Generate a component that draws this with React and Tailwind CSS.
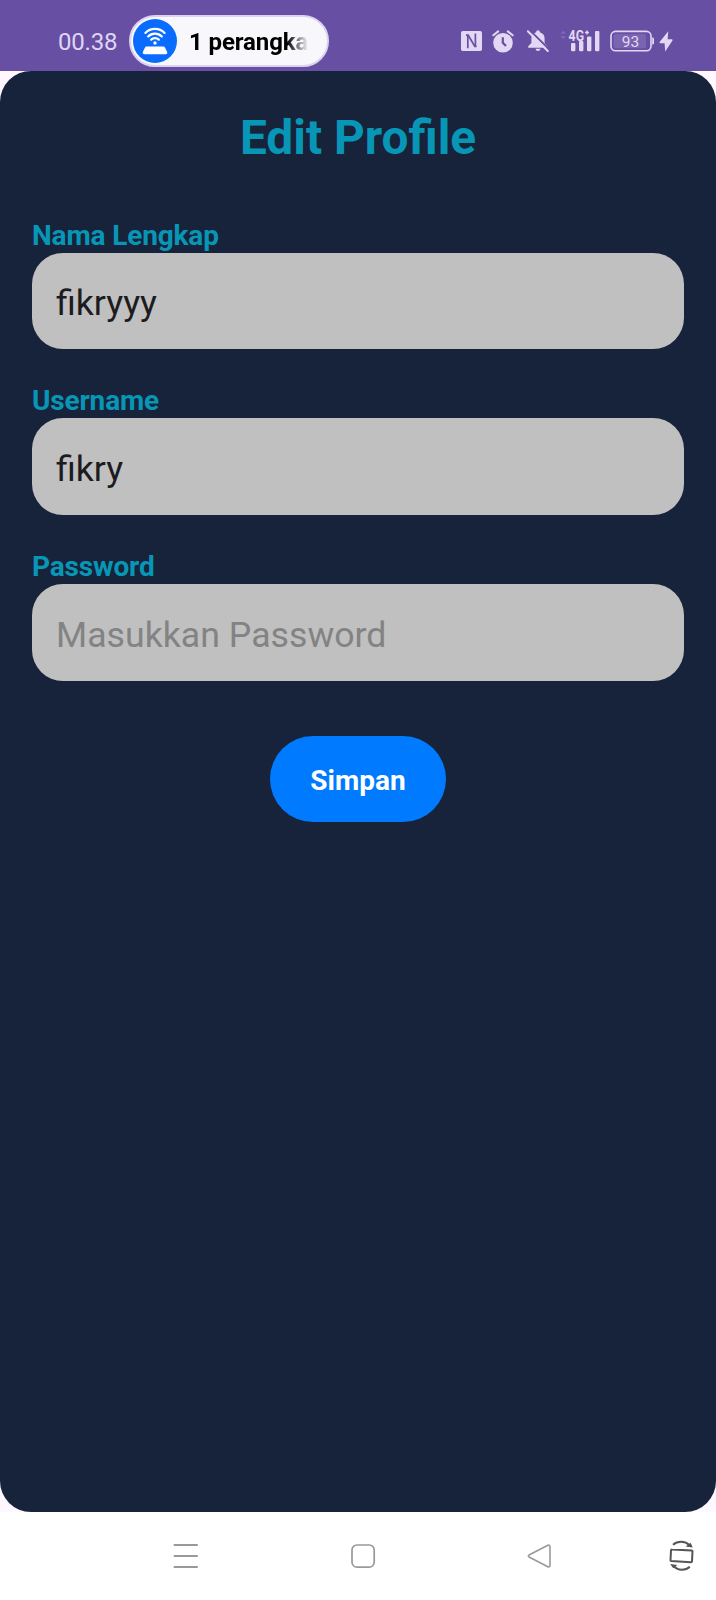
import React from "react";

const TINT = "#e2d8f3";

function HotspotIcon() {
  return (
    <svg className="block size-[44px] shrink-0" viewBox="0 0 44 44">
      <circle cx="22" cy="22" r="22" fill="#0a6cff" />
      <g fill="none" stroke="#fff" strokeWidth="2.2" strokeLinecap="round">
        <path d="M12.4 13.9 C17.6 8.4 26.4 8.4 31.6 13.9" />
        <path d="M15.2 17.4 C18.8 13.6 25.2 13.6 28.8 17.4" />
        <path d="M18.2 20.6 C20.2 18.6 23.8 18.6 25.8 20.6" />
      </g>
      <circle cx="22" cy="24" r="1.7" fill="#fff" />
      <path d="M13.6 27.5H30.4Q31.6 27.5 32.1 28.7L34.3 33.2Q34.6 35.3 32.6 35.3H11.4Q9.4 35.3 9.7 33.2L11.9 28.7Q12.4 27.5 13.6 27.5Z" fill="#fff" />
    </svg>
  );
}

function NfcIcon() {
  return (
    <svg className="block h-[20px] w-[21px]" viewBox="0 0 21 20">
      <rect width="21" height="20" rx="1.8" fill={TINT} />
      <path d="M5 4.2H7.2L13.8 15.4H15.6" fill="none" stroke="#674fa3" strokeWidth="1.7" />
      <path d="M6.8 4V17.2M14.4 2.6V15.6" fill="none" stroke="#674fa3" strokeWidth="1.7" />
    </svg>
  );
}

function AlarmIcon() {
  return (
    <svg className="block h-[23px] w-[22px]" viewBox="0 0 22 23">
      <circle cx="11" cy="12.8" r="9.8" fill={TINT} />
      <path d="M1.3 5.3L6.2 1.4M20.7 5.3L15.8 1.4" stroke={TINT} strokeWidth="2" strokeLinecap="round" />
      <path d="M10.8 7.3V12.8L14 16" fill="none" stroke="#674fa3" strokeWidth="2.2" />
    </svg>
  );
}

function MutedBellIcon() {
  return (
    <svg className="block h-[22px] w-[22px]" viewBox="0 0 22 22">
      <path d="M11 .2C12.2.2 12.8 1 12.8 2.2C16 3 17.6 5.4 17.6 8.5V13L20.4 16.3V17.8H1.2V16.3L4.4 13V8.5C4.4 5.4 6 3 9.2 2.2C9.2 1 9.8.2 11 .2Z" fill={TINT} />
      <path d="M8.4 18.8H13.6Q13 21 11 21T8.4 18.8Z" fill={TINT} />
      <path d="M1.8 -.6L22.8 20" stroke="#674fa3" strokeWidth="2" />
      <path d="M.8 1.2L20.8 21" stroke={TINT} strokeWidth="2" strokeLinecap="round" />
    </svg>
  );
}

function SignalIcon() {
  return (
    <svg className="block h-[24px] w-[40px]" viewBox="0 0 40 24" fontFamily="Roboto, sans-serif">
      <path d="M.4 4.7L3.2 1.7L6 4.7ZM.4 7.3H6L3.2 10.3Z" fill="#8069b5" />
      <g fill={TINT}>
        <rect x="11" y="14" width="4.4" height="8.2" rx="1" />
        <rect x="19" y="12" width="4.4" height="10.2" rx="1" />
        <rect x="27" y="7.5" width="4.4" height="14.7" rx="1" />
        <rect x="35" y="2" width="4.4" height="20.2" rx="1" />
        <text x="8.6" y="11.8" fontSize="14" fontWeight="700" textLength="15.4" lengthAdjust="spacingAndGlyphs">4G</text>
        <path d="M25 3.6H29M27 1.6V5.6" stroke={TINT} strokeWidth="1.5" />
      </g>
    </svg>
  );
}

function BatteryIcon() {
  return (
    <svg className="block h-[22px] w-[45px]" viewBox="0 0 45 22" fontFamily="Roboto, sans-serif">
      <rect x="1" y="1.4" width="40" height="19.4" rx="4.5" fill="none" stroke={TINT} strokeWidth="1.6" />
      <rect x="3.6" y="4" width="32.4" height="14.2" rx="2" fill="#7a63b0" />
      <path d="M42.2 7.6H42.8Q44 7.6 44 9V13.2Q44 14.6 42.8 14.6H42.2Z" fill={TINT} />
      <text x="20.4" y="16.8" fontSize="15.5" textAnchor="middle" fill={TINT}>93</text>
    </svg>
  );
}

function BoltIcon() {
  return (
    <svg className="block h-[21px] w-[14px]" viewBox="0 0 14 21">
      <path d="M9.3.2L.6 11Q.3 12 1 12.2H5.6L6.2 20.6L13.5 9.4Q13.8 8.5 13 8.3H8.6Z" fill={TINT} />
    </svg>
  );
}

function StatusBar() {
  return (
    <header className="flex h-[71px] shrink-0 items-start bg-[#674fa3]">
      <span className="ml-[58px] mt-[26px] w-[71px] text-[24px] leading-[32px] tracking-[-0.2px] text-[#e0d4f4]">00.38</span>
      <div className="mt-[15px] flex h-[52px] w-[200px] items-center rounded-full border-2 border-[#dcd1ee] bg-[#f8f8fc] pl-[2px]">
        <HotspotIcon />
        <span className="ml-[12px] mt-[2px] w-[124px] whitespace-nowrap text-[24px] font-bold leading-[32px] tracking-[-0.1px] text-black [mask-image:linear-gradient(to_right,black_98px,transparent_119px)]">
          1 perangka
        </span>
      </div>
      <div className="ml-[132px] mt-[30px] flex items-start">
        <div className="mt-px"><NfcIcon /></div>
        <div className="ml-[10px]"><AlarmIcon /></div>
        <div className="ml-[13px]"><MutedBellIcon /></div>
        <div className="-mt-px ml-[11px]"><SignalIcon /></div>
        <div className="ml-[10px]"><BatteryIcon /></div>
        <div className="ml-[4px] mt-px"><BoltIcon /></div>
      </div>
    </header>
  );
}

const FIELDS = [
  { label: "Nama Lengkap", value: "fikryyy" },
  { label: "Username", value: "fikry" },
  { label: "Password", placeholder: "Masukkan Password" },
];

function Field({ label, value, placeholder }) {
  return (
    <label className="flex h-[165.7px] flex-col">
      <span className="h-[37px] pt-px text-[28px] font-bold leading-[38px] tracking-[-0.15px] text-[#0896b6]">{label}</span>
      <input
        className="h-[96.5px] w-full rounded-[31px] bg-[#c0c0c0] px-[24px] pt-[5px] text-[35.7px] text-[#1c1b1f] outline-none placeholder:text-[#838383]"
        defaultValue={value}
        placeholder={placeholder}
      />
    </label>
  );
}

function NavBar() {
  return (
    <nav className="flex h-[88px] shrink-0 items-start bg-white pt-[28px]">
      <svg className="ml-[173px] mt-[3px] block h-[26px] w-[26px] shrink-0" viewBox="0 0 26 26">
        <path d="M1.5 2H24M1.5 13H24M1.5 24H24" stroke="#999" strokeWidth="2" strokeLinecap="round" />
      </svg>
      <svg className="ml-[151px] mt-[3px] block h-[26px] w-[26px] shrink-0" viewBox="0 0 26 26">
        <rect x="2" y="2" width="22.2" height="22.2" rx="5" fill="none" stroke="#999" strokeWidth="1.7" />
      </svg>
      <svg className="ml-[151px] mt-[3px] block h-[26px] w-[26px] shrink-0" viewBox="0 0 26 26">
        <path d="M2.5 11.8L20.8 2.3Q23 1.5 23 4V22Q23 24.5 20.8 23.7L2.5 14.2Q.2 13 2.5 11.8Z" fill="none" stroke="#999" strokeWidth="1.6" />
      </svg>
      <svg className="ml-[115px] block h-[32px] w-[28px] shrink-0" viewBox="0 0 28 32">
        <g fill="none" stroke="#555" strokeWidth="2" strokeLinejoin="round">
          <path d="M4.1 9.5L23.6 10.4Q24.5 10.5 24.5 11.3L24 21.2Q23.9 22.3 22.9 22.2L3.2 21Q2.4 20.9 2.5 20L3 10.4Q3.1 9.4 4.1 9.5Z" />
          <path d="M5 4.7C9.5 1 17 .7 21.3 5.1" />
          <path d="M6.2 26.4C10 31 17.5 30.8 21.8 26.8" />
        </g>
        <path d="M24.8 7.4L17.6 6.4L22.6 2.8ZM2.2 24L9.3 25L5.2 28.3Z" fill="#555" />
      </svg>
    </nav>
  );
}

export default function App() {
  return (
    <div className="flex h-[1600px] w-[716px] flex-col overflow-hidden bg-[#fff7ff] font-[Roboto,sans-serif]">
      <StatusBar />
      <main className="flex h-[1441px] flex-col items-center rounded-[31px] bg-[#17233a] px-[32px] pt-[35px]">
        <h1 className="h-[109.7px] text-[47.8px] font-bold leading-[64px] text-[#0896b6]">Edit Profile</h1>
        <form className="w-full">
          {FIELDS.map((field) => (
            <Field key={field.label} {...field} />
          ))}
          <button
            type="button"
            className="mx-auto mt-[23px] block h-[86px] w-[176px] rounded-[43px] bg-[#007bff] pt-[4px] text-[28px] font-bold text-white"
          >
            Simpan
          </button>
        </form>
      </main>
      <NavBar />
    </div>
  );
}
